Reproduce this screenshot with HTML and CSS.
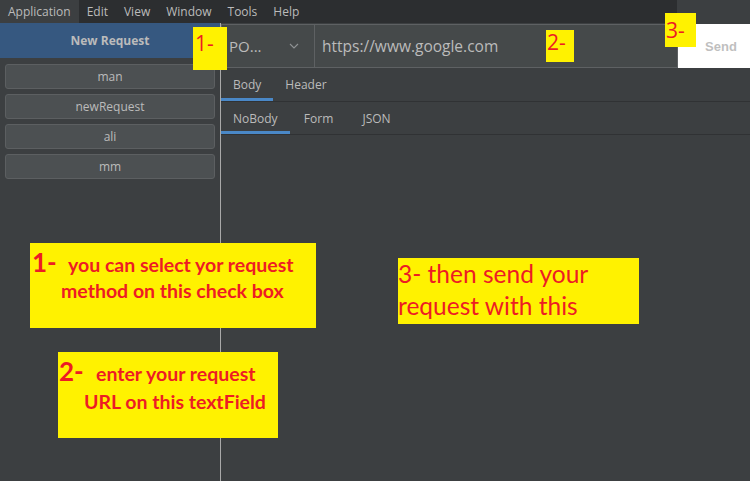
FILE: index.html
```html
<!DOCTYPE html>
<html>
<head>
<meta charset="utf-8">
<link rel="stylesheet" href="styles.css">
</head>
<body>
<div class="app">
  <div class="menubar">
    <div class="menus">
      <span class="menu active">Application</span>
      <span class="menu">Edit</span>
      <span class="menu">View</span>
      <span class="menu">Window</span>
      <span class="menu">Tools</span>
      <span class="menu">Help</span>
    </div>
    <div class="menubar-rest"></div>
  </div>
  <div class="main">
    <aside class="sidebar">
      <div class="new-btn">New Request</div>
      <ul class="req-list">
        <li class="req">man</li>
        <li class="req">newRequest</li>
        <li class="req">ali</li>
        <li class="req">mm</li>
      </ul>
    </aside>
    <section class="content">
      <div class="toolbar">
        <div class="method">
          <span class="method-text">PO...</span>
          <svg class="chev" width="10" height="6" viewBox="0 0 10 6"><path d="M1 1 L5 5 L9 1" fill="none" stroke="#8f9294" stroke-width="1.1"/></svg>
        </div>
        <div class="url">https://www.google.com</div>
        <div class="send">Send</div>
      </div>
      <div class="tabs">
        <span class="tab active">Body</span>
        <span class="tab">Header</span>
      </div>
      <div class="tabs sub">
        <span class="tab active">NoBody</span>
        <span class="tab">Form</span>
        <span class="tab">JSON</span>
      </div>
    </section>
  </div>

  <div class="label label1">1-</div>
  <div class="label label2">2-</div>
  <div class="label label3">3-</div>

  <div class="note note1">
    <div class="nl"><span class="nnum">1-</span><span>you can select yor request</span></div>
    <div class="nl ind1">method on this check box</div>
  </div>
  <div class="note note2">
    <div class="nl"><span class="nnum">2-</span><span>enter your request</span></div>
    <div class="nl ind2">URL on this textField</div>
  </div>
  <div class="note3">
    <div>3- then send your</div>
    <div>request with this</div>
  </div>
</div>
</body>
</html>
```

FILE: styles.css
```css
* { box-sizing: border-box; }
html, body { margin: 0; padding: 0; }
body {
  background: #3c3f41;
  font-family: "Open Sans", "DejaVu Sans", sans-serif;
  color: #bbbbbb;
  width: 750px;
  height: 481px;
  overflow: hidden;
}
.app { position: relative; width: 750px; height: 481px; display: flex; flex-direction: column; }

.menubar { height: 23px; display: flex; flex: none; }
.menus { width: 677px; background: #2c2e30; display: flex; font-size: 12px; }
.menu { padding: 0 8px; line-height: 23px; color: #bbbbbb; }
.menu.active { background: #3c3f41; }
.menubar-rest { flex: 1; background: #3c3f41; }

.main { flex: 1; display: flex; }
.sidebar { width: 221px; border-right: 1px solid #a9a9a9; display: flex; flex-direction: column; }
.new-btn {
  height: 35px; background: #365880; color: #bbbbbb;
  font-weight: bold; font-size: 12px;
  display: flex; align-items: center; justify-content: center;
}
.req-list { list-style: none; margin: 0; padding: 6px 5px 0 5px; display: flex; flex-direction: column; gap: 5px; }
.req {
  height: 25px; background: #4c5052; border: 1px solid #5c5f61; border-radius: 3px;
  font-size: 12px; display: flex; align-items: center; justify-content: center; color: #bbbbbb;
}

.content { flex: 1; display: flex; flex-direction: column; }
.toolbar { height: 44px; margin-top: 1px; display: flex; }
.method {
  width: 94px; background: #45494a; border: 1px solid #5e6163;
  display: flex; align-items: center; justify-content: space-between; padding: 0 15px 0 7px;
  font-size: 15px;
}
.url {
  width: 363px; background: #45494a; border: 1px solid #5e6163; border-left: none;
  display: flex; align-items: center; padding-left: 7px; font-size: 15.5px;
}
.send {
  flex: 1; background: #ffffff; color: #bfbfbf; font-weight: bold; font-size: 13px;
  font-family: "Liberation Sans", Arial, sans-serif;
  display: flex; align-items: center; justify-content: center; padding-left: 14px;
}

.tabs { height: 34px; display: flex; border-bottom: 1px solid #303234; font-size: 12px; }
.tabs.sub { height: 33px; }
.tab { padding: 0 12px; display: flex; align-items: center; color: #bbbbbb; }
.tab.active { box-shadow: inset 0 -3px 0 #4a88c7; }
.tabs.sub .tab { min-width: 58px; justify-content: center; }

.label {
  position: absolute; background: #fff200; color: #ed1c24;
  font-family: "Open Sans", sans-serif; font-size: 21px; line-height: 21px;
  padding-left: 2px;
}
.label1 { left: 193px; top: 27px; width: 34px; height: 43px; padding-top: 6px; }
.label2 { left: 546px; top: 30px; width: 28px; height: 32px; padding-top: 2px; padding-left: 1px; }
.label3 { left: 665px; top: 13px; width: 31px; height: 34px; padding-top: 7px; padding-left: 1px; }

.note {
  position: absolute; background: #fff200; color: #ed1c24;
  font-family: Lato, "Open Sans", sans-serif; font-weight: bold; font-size: 19.5px; line-height: 26px;
}
.nl { white-space: nowrap; }
.nnum { display: inline-block; font-size: 26px; }
.note1 { left: 30px; top: 243px; width: 286px; height: 85px; padding: 6px 0 0 2px; }
.note1 .nnum { width: 36px; }
.ind1 { padding-left: 29px; }
.note2 { left: 58px; top: 352px; width: 220px; height: 86px; padding: 5px 0 0 1px; line-height: 28px; }
.note2 .nnum { width: 37px; }
.ind2 { padding-left: 25px; }

.note3 {
  position: absolute; left: 398px; top: 258px; width: 241px; height: 66px;
  background: #fff200; color: #ed1c24;
  font-family: Lato, "Open Sans", sans-serif; font-size: 24.5px; line-height: 32px; white-space: nowrap;
}
```
